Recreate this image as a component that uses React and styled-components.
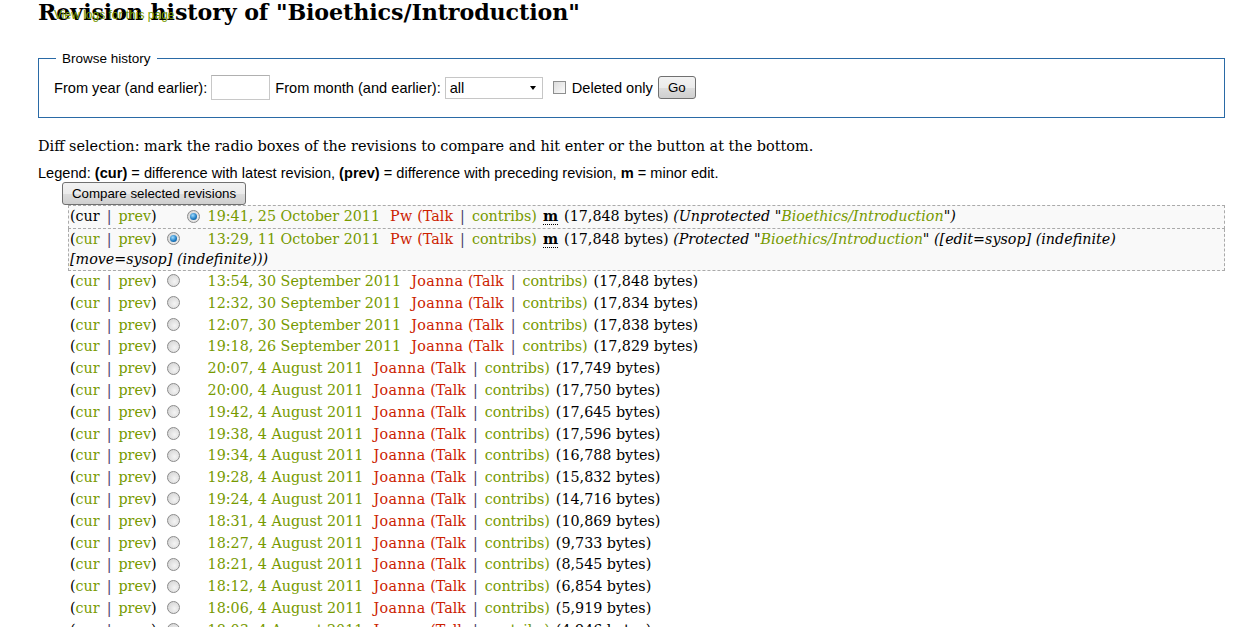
import React from "react";
import styled, { createGlobalStyle } from "styled-components";

const GREEN = "#779a00";
const RED = "#cc2200";

const GlobalStyle = createGlobalStyle`
  html, body {
    margin: 0;
    padding: 0;
    background: #fff;
  }
  body {
    font-family: "DejaVu Serif", serif;
    color: #000;
  }
`;

const revisions = [
  { time: "19:41, 25 October 2011", user: "Pw", minor: true, size: "17,848", top: true,
    comment: { label: "Unprotected", extra: null } },
  { time: "13:29, 11 October 2011", user: "Pw", minor: true, size: "17,848", second: true,
    comment: { label: "Protected", extra: [" ([edit=sysop] (indefinite) ", "[move=sysop] (indefinite)))"] } },
  { time: "13:54, 30 September 2011", user: "Joanna", size: "17,848" },
  { time: "12:32, 30 September 2011", user: "Joanna", size: "17,834" },
  { time: "12:07, 30 September 2011", user: "Joanna", size: "17,838" },
  { time: "19:18, 26 September 2011", user: "Joanna", size: "17,829" },
  { time: "20:07, 4 August 2011", user: "Joanna", size: "17,749" },
  { time: "20:00, 4 August 2011", user: "Joanna", size: "17,750" },
  { time: "19:42, 4 August 2011", user: "Joanna", size: "17,645" },
  { time: "19:38, 4 August 2011", user: "Joanna", size: "17,596" },
  { time: "19:34, 4 August 2011", user: "Joanna", size: "16,788" },
  { time: "19:28, 4 August 2011", user: "Joanna", size: "15,832" },
  { time: "19:24, 4 August 2011", user: "Joanna", size: "14,716" },
  { time: "18:31, 4 August 2011", user: "Joanna", size: "10,869" },
  { time: "18:27, 4 August 2011", user: "Joanna", size: "9,733" },
  { time: "18:21, 4 August 2011", user: "Joanna", size: "8,545" },
  { time: "18:12, 4 August 2011", user: "Joanna", size: "6,854" },
  { time: "18:06, 4 August 2011", user: "Joanna", size: "5,919" },
  { time: "18:03, 4 August 2011", user: "Joanna", size: "4,946" },
];

const App = () => {
  return (
    <>
      <GlobalStyle />
      <Page>
        <Header>
          <Title>Revision history of "Bioethics/Introduction"</Title>
          <LogsLink>View logs for this page</LogsLink>
        </Header>

        <Fieldset>
          <Legend>Browse history</Legend>
          <FormRow>
            <span>From year (and earlier):</span>
            <TextInput />
            <Label $gap={5}>From month (and earlier):</Label>
            <Select>
              <span>all</span>
              <Arrow />
            </Select>
            <Checkbox />
            <Label $gap={6}>Deleted only</Label>
            <Button $gap={5}>Go</Button>
          </FormRow>
        </Fieldset>

        <Intro>
          Diff selection: mark the radio boxes of the revisions to compare and hit enter or the button at the bottom.
        </Intro>
        <LegendLine>
          Legend: <b>(cur)</b> = difference with latest revision, <b>(prev)</b> = difference with preceding revision,{" "}
          <b>m</b> = minor edit.
        </LegendLine>
        <CompareWrap>
          <Button>Compare selected revisions</Button>
        </CompareWrap>

        <History>
          {revisions.map((rev, i) => (
            <Row
              key={i}
              $boxed={rev.top || rev.second}
              $first={rev.top}
              $tight={rev.second}
            >
              (
              {rev.top ? <span>cur</span> : <Link>cur</Link>}
              <Sep>|</Sep>
              <Link>prev</Link>)
              <Radios>
                <Radio $hidden={rev.top} $checked={rev.second} />
                <Radio $hidden={!rev.top} $checked={rev.top} />
              </Radios>
              <Link>{rev.time}</Link>
              <User>{rev.user}</User>{" "}
              <Red>(Talk</Red>
              <Sep>|</Sep>
              <Link>contribs)</Link>
              {rev.minor && <Minor title="This is a minor edit">m</Minor>}
              <Size>({rev.size} bytes)</Size>
              {rev.comment && (
                <Comment>
                  {" "}({rev.comment.label} "<Link>Bioethics/Introduction</Link>"
                  {rev.comment.extra ? (
                    <>
                      {rev.comment.extra[0]}
                      <br />
                      {rev.comment.extra[1]}
                    </>
                  ) : (
                    ")"
                  )}
                </Comment>
              )}
            </Row>
          ))}
        </History>
      </Page>
    </>
  );
};

const Page = styled.div`
  padding: 0 14px 0 38px;
  position: relative;
`;

const Header = styled.div`
  position: relative;
  height: 24px;
`;

const Title = styled.h1`
  margin: 0;
  font-family: "DejaVu Serif", serif;
  font-size: 22.2px;
  line-height: 24px;
  font-weight: 700;
  letter-spacing: -0.1px;
  white-space: nowrap;
`;

const LogsLink = styled.a`
  position: absolute;
  left: 16px;
  top: 8px;
  font-family: "Liberation Sans", Arial, sans-serif;
  font-size: 12px;
  color: ${GREEN};
`;

const Fieldset = styled.fieldset`
  margin: 27px 0 0;
  padding: 9px 15px 17px 15px;
  border: 1px solid #2a6aa6;
  font-family: "Liberation Sans", Arial, sans-serif;
  font-size: 14.6px;
`;

const Legend = styled.legend`
  font-size: 13.5px;
  padding: 0 6px;
  margin-left: 2px;
`;

const FormRow = styled.div`
  display: flex;
  align-items: center;
`;

const Label = styled.span`
  margin-left: ${(p) => p.$gap}px;
`;

const TextInput = styled.span`
  display: inline-block;
  width: 57px;
  height: 23px;
  border: 1px solid #c8c8c8;
  border-top-color: #b0b0b0;
  background: #fff;
  margin-left: 4px;
`;

const Select = styled.span`
  display: inline-flex;
  align-items: center;
  justify-content: space-between;
  box-sizing: border-box;
  width: 98px;
  height: 22px;
  border: 1px solid #c6c6c6;
  padding: 0 6px 0 4px;
  margin-left: 4px;
`;

const Arrow = styled.span`
  width: 0;
  height: 0;
  border-left: 3.5px solid transparent;
  border-right: 3.5px solid transparent;
  border-top: 4px solid #000;
`;

const Checkbox = styled.span`
  display: inline-block;
  width: 11px;
  height: 11px;
  border: 1px solid #8e8f8f;
  background: linear-gradient(135deg, #dcdcdc, #fbfbfb);
  margin-left: 10px;
`;

const Button = styled.span`
  display: inline-flex;
  align-items: center;
  box-sizing: border-box;
  height: 23px;
  padding: 0 9px;
  margin-left: ${(p) => p.$gap || 0}px;
  border: 1px solid #707070;
  border-radius: 3px;
  background: linear-gradient(#f2f2f2 0%, #ebebeb 50%, #dddddd 51%, #cfcfcf 100%);
  font-family: "Liberation Sans", Arial, sans-serif;
  font-size: 13.3px;
  color: #000;
`;

const Intro = styled.p`
  margin: 17px 0 0;
  font-size: 14.45px;
  line-height: 22px;
`;

const LegendLine = styled.p`
  margin: 7px 0 0;
  font-family: "Liberation Sans", Arial, sans-serif;
  font-size: 14.6px;
  line-height: 18px;
`;

const CompareWrap = styled.div`
  padding-left: 24px;
  height: 23px;
`;

const History = styled.ul`
  list-style: none;
  margin: 0;
  padding: 0 0 0 31px;
`;

const Row = styled.li`
  font-size: 14.3px;
  line-height: ${(p) => (p.$tight ? "20.6px" : "21.8px")};
  padding-left: 1px;
  border: ${(p) => (p.$boxed ? "1px dashed #aaa" : "1px solid transparent")};
  border-top: ${(p) => (p.$boxed && p.$first ? "1px dashed #aaa" : "none")};
  border-bottom: ${(p) => (p.$boxed ? "1px dashed #aaa" : "none")};
  background: ${(p) => (p.$boxed ? "#f9f9f9" : "transparent")};
  margin-left: -1px;
`;

const Link = styled.a`
  color: ${GREEN};
`;

const Red = styled.a`
  color: ${RED};
`;

const User = styled(Red)`
  margin-left: 10px;
  letter-spacing: 0.4px;
`;

const Sep = styled.span`
  color: #4a3a6a;
  margin: 0 7px;
`;

const Radios = styled.span`
  display: inline-block;
  height: 13px;
  line-height: 13px;
  margin: 0 8px 0 10px;
  vertical-align: middle;
  position: relative;
  top: -1px;
`;

const Radio = styled.span`
  position: relative;
  display: inline-block;
  vertical-align: top;
  box-sizing: border-box;
  width: 13px;
  height: 13px;
  border-radius: 50%;
  border: 1px solid #8b8b8b;
  background: radial-gradient(circle at 60% 60%, #f4f4f4, #cfcfcf);
  visibility: ${(p) => (p.$hidden ? "hidden" : "visible")};

  & + & {
    margin-left: 7px;
  }

  &::after {
    content: "";
    display: ${(p) => (p.$checked ? "block" : "none")};
    position: absolute;
    left: 2px;
    top: 2px;
    width: 7px;
    height: 7px;
    border-radius: 50%;
    background: radial-gradient(circle at 40% 35%, #9fdcff, #1a78c0 60%, #0b3f73);
  }
`;

const Minor = styled.abbr`
  font-weight: 700;
  text-decoration: none;
  border-bottom: 1px dotted #000;
  margin-left: 6px;
`;

const Size = styled.span`
  margin-left: 6px;
`;

const Comment = styled.i`
  font-style: italic;
`;

export default App;
